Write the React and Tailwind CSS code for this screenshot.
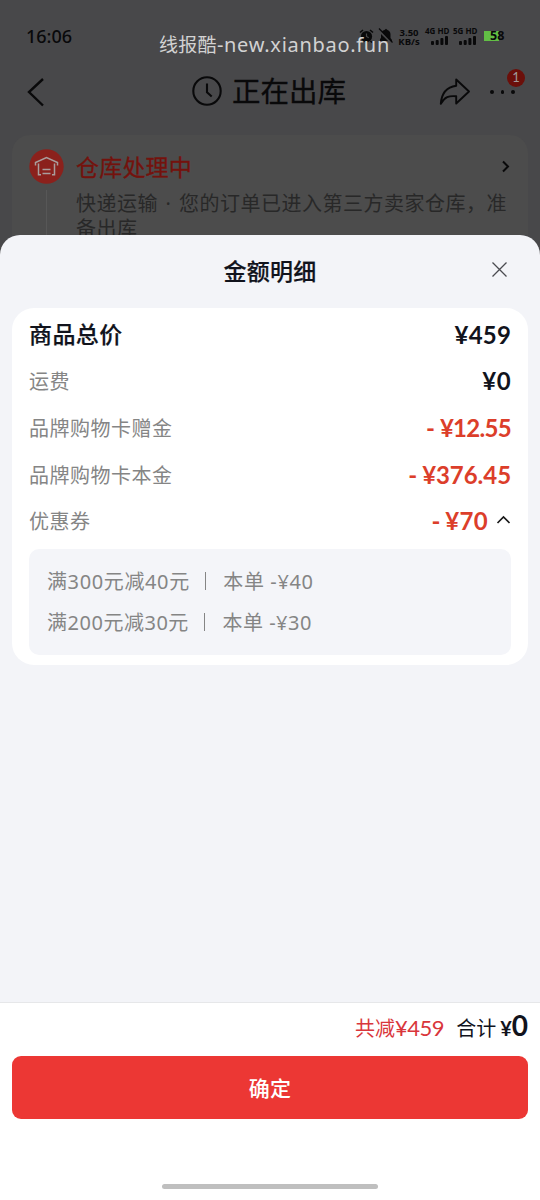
import React from "react";

const CJK = "font-['Noto_Sans_CJK_SC',sans-serif]";

function StatusBar() {
  return (
    <div className="relative h-[62px] shrink-0 pt-[24px] pl-[26px] pr-[35px] flex items-start justify-between text-[#09090a]">
      <span className="font-['Noto_Sans',sans-serif] font-medium text-[18px] leading-[25px]">16:06</span>
      <div className="flex items-start pt-[3px] font-['Open_Sans',sans-serif] font-bold">
        <svg className="mt-[2px]" width="15" height="14" viewBox="0 0 15 14" fill="none">
          <circle cx="7.5" cy="7.5" r="5.6" fill="#09090a" />
          <path d="M1 3.5 4 1M14 3.5 11 1M3.5 12l-1.5 1.5M11.5 12l1.5 1.5" stroke="#09090a" strokeWidth="1.6" />
          <path d="M7.5 4.5v3l2.2 1.3" stroke="#48484a" strokeWidth="1.2" />
        </svg>
        <svg className="ml-[4px] mt-[1px]" width="15" height="16" viewBox="0 0 15 16">
          <path d="M2 13V11l1-1V6.500C3 4 4.500 2.500 6.500 2L8 .8 9.500 2c2 .5 3 2.500 3 4.500V10l1.500 2v1Z" fill="#09090a" />
          <path d="M0 1.500 14 15.500" stroke="#48484a" strokeWidth="2" />
          <path d="M1 .5 14.500 14.500" stroke="#09090a" strokeWidth="1.200" />
        </svg>
        <span className="ml-[5px] mt-[1px] w-[22px] text-center text-[9.500px] leading-[9px]">3.50<br />KB/s</span>
        {["4G HD", "5G HD"].map((label, i) => (
          <div key={label} className={i ? "ml-[3px] w-[25px]" : "ml-[5px] w-[25px]"}>
            <span className="block whitespace-nowrap text-[8px] leading-[8px]">{label}</span>
            <svg className="mt-[1px] ml-[5px]" width="19" height="9" viewBox="0 0 19 9" fill="#09090a">
              <rect x="1" y="5" width="3" height="4" rx="1" />
              <rect x="5.700" y="4" width="3" height="5" rx="1" />
              <rect x="10.400" y="2" width="3" height="7" rx="1" />
              <rect x="15" y="0" width="3" height="9" rx="1" />
            </svg>
          </div>
        ))}
        <div className="ml-[6px] mt-[4px] h-[10px] w-[21px] flex items-center bg-linear-to-r from-[#62bf45] from-[72%] to-transparent to-[72%]">
          <span className="pl-[6px] text-[12.500px] leading-[10px]">58</span>
        </div>
      </div>
      <span className="absolute left-[159px] top-[31px] whitespace-nowrap font-['Noto_Sans','Noto_Sans_CJK_SC',sans-serif] text-[19px] leading-[28px] tracking-[0.300px] text-[#d2d2d2]">
        线报酷<span className="text-[20px] tracking-[0.700px]">-new.xianbao.fun</span>
      </span>
    </div>
  );
}

function Header() {
  return (
    <div className="h-[73px] shrink-0 flex items-start text-[#09090a]">
      <svg className="ml-[26px] mt-[15px]" width="20" height="30" viewBox="0 0 20 30" fill="none" stroke="#09090a" strokeWidth="2.400">
        <path d="M17 2 3 15 17 28.500" />
      </svg>
      <svg className="ml-[145px] mt-[13px]" width="32" height="32" viewBox="0 0 32 32" fill="none" stroke="#09090a" strokeWidth="2.100">
        <circle cx="16" cy="16" r="13.700" />
        <path d="M16 8.500v8.800l4.700 4.200" />
      </svg>
      <h1 className="ml-[9px] mt-[8px] w-[116px] whitespace-nowrap text-[28.500px] leading-[40px] font-normal [-webkit-text-stroke:0.3px]">正在出库</h1>
      <svg className="ml-[91px] mt-[15px]" width="32" height="29" viewBox="0 0 32 29" fill="none" stroke="#09090a" strokeWidth="1.900" strokeLinejoin="round">
        <path d="M17.200 2.500 30 14.500 17.200 26.500V19.300C10 18.500 5.500 20 1.800 26.800 2.500 16 8 10 17.200 8.700Z" />
      </svg>
      <div className="relative ml-[19px] mt-[28px] flex gap-[7px]">
        <i className="size-[3.500px] rounded-full bg-[#09090a]" />
        <i className="size-[3.500px] rounded-full bg-[#09090a]" />
        <i className="size-[3.500px] rounded-full bg-[#09090a]" />
        <span className="absolute left-[17px] -top-[21px] size-[18px] rounded-full bg-[#6b0f0a] text-center font-['Lato',sans-serif] text-[13px] leading-[17px] text-[#a09a98]">1</span>
      </div>
    </div>
  );
}

function OrderCard() {
  return (
    <div className="mx-[12px] h-[120px] flex rounded-t-[18px] bg-[#4c4c4c] pl-[17px] pt-[14px]">
      <div className="w-[35px] flex flex-col items-center">
        <svg className="shrink-0" width="35" height="35" viewBox="0 0 35 35" fill="none">
          <circle cx="17.500" cy="17.500" r="17.200" fill="#8b211c" />
          <path d="M6.500 16.500v-3L17.500 8.500l11 5v3M9.500 14.500v11.300h2.500M25.500 14.500v11.300H23" stroke="#a99e9d" strokeWidth="1.500" />
          <path d="M13.500 20.500h8M13.500 24.500h8" stroke="#a99e9d" strokeWidth="1.500" />
        </svg>
        <div className="mt-[6px] w-px flex-1 bg-[#575757]" />
      </div>
      <div className="ml-[12px] flex-1">
        <div className="flex justify-between items-center pr-[18px]">
          <span className="text-[23px] leading-[34px] tracking-[0.200px] font-normal [-webkit-text-stroke:0.3px] text-[#74120d]">仓库处理中</span>
          <svg width="9" height="13" viewBox="0 0 9 13" fill="none" stroke="#09090a" strokeWidth="2"><path d="m2 1.500 5 5-5 5" /></svg>
        </div>
        <p className="mt-[8px] w-[436px] font-['Noto_Sans','Noto_Sans_CJK_SC',sans-serif] text-[20px] leading-[25px] tracking-[0.500px] [word-spacing:1.900px] text-[#282828]">
          <span className="block whitespace-nowrap">快递运输 · 您的订单已进入第三方卖家仓库，准</span>
          <span className="block">备出库</span>
        </p>
      </div>
    </div>
  );
}

const rows = [
  { label: "运费", value: "¥0", minus: false, spacing: "tracking-[0.400px]" },
  { label: "品牌购物卡赠金", value: "¥12.55", minus: true, spacing: "tracking-[-0.700px]" },
  { label: "品牌购物卡本金", value: "¥376.45", minus: true, spacing: "tracking-[-0.050px]" },
  { label: "优惠券", value: "¥70", minus: true, spacing: "tracking-[0.300px]", open: true },
];

const coupons = [
  { rule: "满300元减40元", off: "-¥40", spacing: "tracking-[0.620px]" },
  { rule: "满200元减30元", off: "-¥30", spacing: "tracking-[0.520px]" },
];

function PriceCard() {
  return (
    <section className="mx-[12px] h-[357px] rounded-[22px] bg-white px-[17px] pt-[3px]">
      <div className="h-[47px] flex items-center justify-between text-[#11131c]">
        <span className="-mt-[4px] text-[23px] leading-[46px] tracking-[0.400px] font-medium [-webkit-text-stroke:0.2px]">商品总价</span>
        <span className="font-['Lato',sans-serif] font-bold text-[24px] leading-[46px] tracking-[0.200px]">¥459</span>
      </div>
      {rows.map((r) => (
        <div key={r.label} className="h-[46.700px] flex items-center justify-between">
          <span className="text-[20px] leading-[40px] tracking-[0.480px] text-[#858585]">{r.label}</span>
          <span className={`flex items-center font-['Lato',sans-serif] font-bold text-[24px] leading-[40px] ${r.minus ? "text-[#dc3e2a]" : "text-[#11131c]"}`}>
            {r.minus && <span className="mr-[5px]">-</span>}
            <span className={r.spacing}>{r.value}</span>
            {r.open && (
              <svg className="ml-[8px] -mt-[2px]" width="15" height="10" viewBox="0 0 15 10" fill="none" stroke="#1a1a1a" strokeWidth="1.700"><path d="m1.500 8 6-6 6 6" /></svg>
            )}
          </span>
        </div>
      ))}
      <div className="mt-[4px] h-[106px] rounded-[10px] bg-[#f4f5f9] pl-[18px] pt-[12px] text-[#858585]">
        {coupons.map((c) => (
          <div key={c.rule} className={`h-[41px] flex items-center font-['Noto_Sans','Noto_Sans_CJK_SC',sans-serif] text-[20px] leading-[40px] whitespace-nowrap ${c.spacing}`}>
            <span className="pt-[2px]">{c.rule}</span>
            <i className="ml-[15px] mr-[17px] h-[18px] w-[1.500px] bg-[#858585]" />
            <span className="pt-[2px]">本单 {c.off}</span>
          </div>
        ))}
      </div>
    </section>
  );
}

export default function App() {
  return (
    <main className={`h-[1200px] w-[540px] overflow-hidden flex flex-col bg-[#48484a] ${CJK}`}>
      <div className="h-[235px] shrink-0 overflow-hidden flex flex-col">
        <StatusBar />
        <Header />
        <OrderCard />
      </div>
      <div className="flex-1 flex flex-col overflow-hidden rounded-t-[20px] bg-[#f3f4f8]">
        <div className="h-[73px] shrink-0 grid grid-cols-[1fr_auto_1fr] items-center text-[#11131c]">
          <h2 className="col-start-2 -mt-[4px] text-[23px] leading-[46px] tracking-[0.200px] font-medium [-webkit-text-stroke:0.2px]">金额明细</h2>
          <svg className="justify-self-end mr-[32px] -mt-[5px]" width="17" height="17" viewBox="0 0 17 17" stroke="#4a4b50" strokeWidth="1.300"><path d="m1.500 1.500 14 14m0-14-14 14" /></svg>
        </div>
        <PriceCard />
        <footer className="mt-auto h-[198px] shrink-0 flex flex-col border-t border-[#e6e7e9] bg-white">
          <div className="h-[53px] flex items-baseline justify-end pr-[12px] pt-[2px] text-[20px] leading-[40px] text-[#11131c]">
            <span className="text-[#d9363b]">共减<span className="font-['Lato',sans-serif] text-[22px] tracking-[-0.500px]">¥459</span></span>
            <span className="ml-[12px]">合计</span>
            <span className="ml-[4px] font-['Lato',sans-serif] font-bold text-[20px]">¥<span className="text-[28px]">0</span></span>
          </div>
          <button className="mx-[12px] h-[63px] shrink-0 rounded-[9px] bg-[#ec3734] pb-[2px] text-[21px] leading-[30px] font-medium tracking-[0.300px] text-white">确定</button>
          <div className="mt-auto mb-[11px] self-center h-[5px] w-[216px] rounded-full bg-[#bfbfbf]" />
        </footer>
      </div>
    </main>
  );
}
